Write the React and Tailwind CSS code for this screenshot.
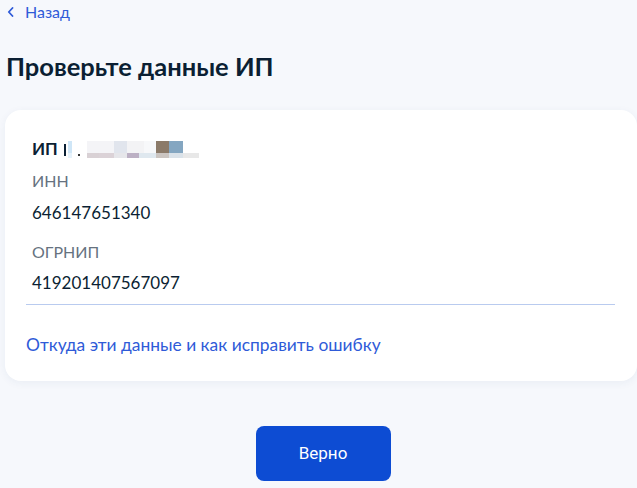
import React from "react";

export default function App() {
  return (
    <div className="w-[637px] h-[488px] overflow-hidden bg-[#f6f8fc] font-['Lato','Noto_Sans',sans-serif]">
      <div className="pl-[7px] pt-[2px] flex items-center gap-[11px] text-[#2f5bd8] text-[16px] leading-[20px]">
        <svg width="7" height="10" viewBox="0 0 7 10" fill="none">
          <path d="M5.5 1 L1.8 5 L5.5 9" stroke="#2f5bd8" strokeWidth="1.8" strokeLinecap="round" strokeLinejoin="round" />
        </svg>
        <span>Назад</span>
      </div>
      <h1 className="pl-[6px] mt-[28px] text-[25.5px] leading-[32px] font-bold text-[#0b1f33]">Проверьте данные ИП</h1>
      <div className="ml-[5px] mt-[28px] w-[632px] bg-white rounded-[16px] shadow-[0_2px_8px_rgba(40,60,120,0.06)] pl-[21px] pr-[22px] pt-[27px] pb-[26px]">
        <div className="pl-[6px] flex items-end text-[17px] leading-[24px] font-bold text-[#0b1f33]">
          <span>ИП</span>
          <span className="ml-[6px] mb-[5px] w-[2px] h-[12px] bg-[#0b1f33]" />
          <span className="ml-[2px] flex flex-col">
            <span className="flex h-[12px]">
              <span className="w-[4px] bg-[#cfe6f7]" />
              <span className="w-[15px] bg-white" />
              <span className="w-[27px] bg-[#f4f4f7]" />
              <span className="w-[13px] bg-[#e1e5ed]" />
              <span className="w-[17px] bg-[#f3f3f5]" />
              <span className="w-[12px] bg-[#f7f8fa]" />
              <span className="w-[13px] bg-[#8b7a69]" />
              <span className="w-[14px] bg-[#84a6c1]" />
            </span>
            <span className="flex h-[5px] mb-[3px]">
              <span className="w-[4px] bg-[#e6f2fb]" />
              <span className="w-[15px] bg-white relative"><span className="absolute left-[6px] top-[1px] w-[2px] h-[2px] bg-[#333]" /></span>
              <span className="w-[12px] bg-[#d9d1d5]" />
              <span className="w-[15px] bg-[#dbd2d7]" />
              <span className="w-[13px] bg-[#e6e6ea]" />
              <span className="w-[12px] bg-[#bcb0c4]" />
              <span className="w-[17px] bg-[#dfe8ef]" />
              <span className="w-[13px] bg-[#cbc5c1]" />
              <span className="w-[14px] bg-[#dae2e9]" />
              <span className="w-[16px] bg-[#e8e8e8]" />
            </span>
          </span>
        </div>
        <div className="pl-[6px] mt-[10px] text-[16px] leading-[20px] text-[#66727f]">ИНН</div>
        <div className="pl-[6px] mt-[12px] text-[17px] leading-[20px] text-[#0b1f33]">646147651340</div>
        <div className="pl-[6px] mt-[19px] text-[16px] leading-[20px] text-[#66727f]">ОГРНИП</div>
        <div className="pl-[6px] mt-[11px] text-[17px] leading-[20px] text-[#0b1f33]">419201407567097</div>
        <div className="mt-[11px] h-px bg-[#b9cbef]" />
        <div className="mt-[30px] text-[17.4px] leading-[20px] text-[#2f5bd8]">Откуда эти данные и как исправить ошибку</div>
      </div>
      <div className="mt-[45px] flex justify-center">
        <button className="w-[135px] h-[55px] rounded-[8px] bg-[#0d4cd3] text-white text-[17px] font-['Roboto',sans-serif] ml-[9px]">Верно</button>
      </div>
    </div>
  );
}
